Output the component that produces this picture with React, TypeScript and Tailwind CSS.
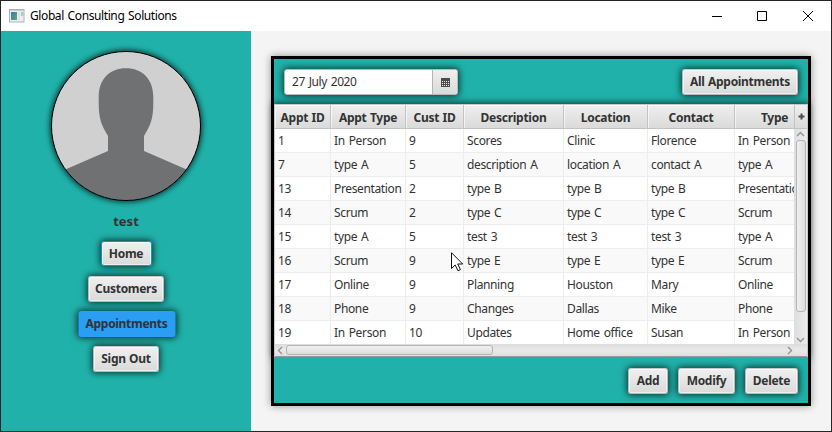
import React from "react";

const columns = [
  { label: "Appt ID", width: 56 },
  { label: "Appt Type", width: 75 },
  { label: "Cust ID", width: 58 },
  { label: "Description", width: 100 },
  { label: "Location", width: 84 },
  { label: "Contact", width: 87 },
  { label: "Type", width: 80 },
];

const rows = [
  ["1", "In Person", "9", "Scores", "Clinic", "Florence", "In Person"],
  ["7", "type A", "5", "description A", "location A", "contact A", "type A"],
  ["13", "Presentation", "2", "type B", "type B", "type B", "Presentation"],
  ["14", "Scrum", "2", "type C", "type C", "type C", "Scrum"],
  ["15", "type A", "5", "test 3", "test 3", "test 3", "type A"],
  ["16", "Scrum", "9", "type E", "type E", "type E", "Scrum"],
  ["17", "Online", "9", "Planning", "Houston", "Mary", "Online"],
  ["18", "Phone", "9", "Changes", "Dallas", "Mike", "Phone"],
  ["19", "In Person", "10", "Updates", "Home office", "Susan", "In Person"],
];

function Button({ label, className, look = "normal" }: { label: string; className: string; look?: "normal" | "focus" | "active" }) {
  const looks = {
    normal:
      "border border-[#b9b9b9] border-t-[#c8c8c8] bg-linear-to-b from-[#f0f0f0] to-[#dadada] shadow-[inset_0_0_0_1px_rgba(255,255,255,0.55),0_0_7px_1px_rgba(0,0,0,0.72)]",
    focus:
      "border border-[#1592cf] bg-linear-to-b from-[#f0f0f0] to-[#dadada] shadow-[inset_0_0_0_1px_rgba(255,255,255,0.55),0_0_7px_1px_rgba(0,0,0,0.72)]",
    active: "bg-[#2a9df4] shadow-[0_0_7px_1px_rgba(0,0,0,0.72)]",
  };
  return (
    <button className={`flex shrink-0 items-center justify-center rounded-[3px] font-bold tracking-[-0.3px] [word-spacing:0.6px] ${looks[look]} ${className}`}>
      <span className="whitespace-nowrap">{label}</span>
    </button>
  );
}

function Avatar() {
  return (
    <svg width="170" height="170" viewBox="0 0 170 170" className="block shrink-0">
      <defs>
        <clipPath id="face"><circle cx="85" cy="85" r="74.5" /></clipPath>
        <filter id="glow" x="-20%" y="-20%" width="140%" height="140%"><feGaussianBlur stdDeviation="3" /></filter>
      </defs>
      <circle cx="85" cy="85" r="75.5" fill="#000" opacity=".85" filter="url(#glow)" />
      <circle cx="85" cy="85" r="74.5" fill="#d0d0d0" />
      <path
        clipPath="url(#face)"
        fill="#707173"
        d="M85 27.300C69 27.300 57.700 38 57.700 56V62C57.700 78 60.500 84 67 95V110L25.500 128L0 170H170L144.500 128L103 110V95C109.500 84 112.300 78 112.300 62V56C112.300 38 101 27.300 85 27.300Z"
      />
      <circle cx="85" cy="85" r="74.500" fill="none" stroke="#000" />
    </svg>
  );
}

function Chevron({ d, className }: { d: string; className?: string }) {
  return (
    <svg width="9" height="9" viewBox="0 0 9 9" fill="none" stroke="#949494" strokeWidth="1.400" className={`block shrink-0 ${className ?? ""}`}>
      <path d={d} />
    </svg>
  );
}

function TitleBar() {
  return (
    <header className="flex h-[30px] shrink-0 items-center bg-white pl-2">
      <svg width="16" height="14" viewBox="0 0 16 14" className="shrink-0">
        <defs>
          <linearGradient id="app" x2="1" y2="1"><stop stopColor="#4778a8" /><stop offset="1" stopColor="#4cac78" /></linearGradient>
        </defs>
        <rect x=".5" y=".5" width="14.500" height="12.500" fill="#ededf0" stroke="#aeb2b7" />
        <path d="M1 1.500H15" stroke="#c5cbd0" />
        <rect x="2" y="3" width="6" height="8" fill="url(#app)" />
        <rect x="9" y="3" width="2" height="8" fill="#dce3e7" />
        <rect x="12" y="3" width="2.500" height="4" fill="#a6d0c4" />
      </svg>
      <span className="ml-[5px] grow text-black tracking-[-0.4px] [word-spacing:1px]">Global Consulting Solutions</span>
      <svg width="120" height="12" viewBox="0 0 120 12" fill="none" stroke="#000" className="shrink-0">
        <path d="M1 6.500H11M46.500 1.500H55.500V10.500H46.500ZM92 1L102 11M102 1L92 11" />
      </svg>
    </header>
  );
}

function Sidebar() {
  return (
    <aside className="flex w-[250px] shrink-0 flex-col items-center bg-[#20b2aa] pt-[10px]">
      <Avatar />
      <div className="mt-[1px] h-[18px] text-[13px] leading-[18px] font-bold">test</div>
      <nav className="mt-[11px] flex flex-col items-center gap-[9px]">
        <Button label="Home" look="focus" className="h-[25px] w-[51px]" />
        <Button label="Customers" className="mt-[1px] h-[26px] w-[76px]" />
        <Button label="Appointments" look="active" className="h-[26px] w-[97px] translate-x-[0.5px]" />
        <Button label="Sign Out" className="h-[26px] w-[66px]" />
      </nav>
    </aside>
  );
}

function DatePicker() {
  return (
    <div className="flex h-[26px] w-[174px] rounded-[3px] border border-[#bababa] bg-white shadow-[0_0_7px_1px_rgba(0,0,0,0.72)]">
      <div className="flex grow items-center pl-[7px] tracking-[-0.4px] [word-spacing:1px]">27 July 2020</div>
      <div className="flex w-[25px] items-center justify-center rounded-r-[2px] border-l border-[#b5b5b5] bg-linear-to-b from-[#efefef] to-[#dadada]">
        <svg width="9" height="9" viewBox="0 0 9 9">
          <rect width="9" height="9" fill="#4d4d4d" />
          <path d="M1 3.500H8M1 5.500H8M1 7.500H8" stroke="#e8e8e8" strokeDasharray="1 1" />
        </svg>
      </div>
    </div>
  );
}

function AppointmentTable() {
  return (
    <div className="flex h-[253px] shrink-0 flex-col border-x border-t border-[#c8c8c8] bg-white shadow-[0_0_7px_1px_rgba(0,0,0,0.720)]">
      <div className="flex h-[24px] shrink-0 border-b border-[#c3c3c3] bg-linear-to-b from-[#efefef] to-[#dadada]">
        <div className="flex w-[519px] overflow-hidden">
          {columns.map((c) => (
            <div
              key={c.label}
              style={{ width: c.width }}
              className="flex shrink-0 items-center justify-center border-r border-[#c3c3c3] pt-[2px] font-bold tracking-[-0.26px] [word-spacing:0.5px] whitespace-nowrap shadow-[inset_1px_1px_0_rgba(255,255,255,0.6)]"
            >
              {c.label}
            </div>
          ))}
        </div>
        <div className="flex grow items-center justify-center border-l border-[#c3c3c3]">
          <svg width="7" height="7" viewBox="0 0 7 7"><path d="M3.500 .5V6.500M.5 3.500H6.500" stroke="#4d4d4d" strokeWidth="2" /></svg>
        </div>
      </div>
      <div className="flex h-[215px] shrink-0">
        <div className="w-[519px] shrink-0 overflow-hidden">
          {rows.map((row, i) => (
            <div key={row[0]} className={`flex h-[24px] border-b border-[#ededed] ${i % 2 ? "bg-[#f9f9f9]" : "bg-white"}`}>
              {row.map((cell, j) => (
                <div
                  key={j}
                  style={{ width: columns[j].width }}
                  className="flex shrink-0 items-center border-r border-[#ededed] pt-px pl-[3px] tracking-[-0.36px] [word-spacing:1.2px] whitespace-nowrap"
                >
                  {cell}
                </div>
              ))}
            </div>
          ))}
        </div>
        <div className="flex grow flex-col items-center bg-linear-to-r from-[#dedede] to-[#ebebeb] pt-[1px]">
          <Chevron d="M1 6L4.500 2.500L8 6" />
          <div className="mt-[1px] h-[172px] w-[10px] rounded-[3px] border border-[#b5b5b5] bg-linear-to-r from-[#f0f0f0] to-[#dddddd]" />
          <Chevron d="M1 3L4.500 6.500L8 3" className="mt-auto" />
        </div>
      </div>
      <div className="flex grow items-center border-b border-b-[#999] bg-linear-to-b from-[#dcdcdc] via-[#e9e9e9] to-[#e0e0e0] pl-px">
        <Chevron d="M6 1L2.500 4.500L6 8" />
        <div className="ml-[1px] h-[10px] w-[207px] rounded-[3px] border border-[#b5b5b5] bg-linear-to-b from-[#f0f0f0] to-[#dddddd]" />
        <Chevron d="M3 1L6.500 4.500L3 8" className="mr-[13px] ml-auto" />
      </div>
    </div>
  );
}

export default function App() {
  return (
    <div className="relative flex h-[432px] w-[832px] flex-col overflow-hidden border border-[#252427] bg-[#f4f4f4] font-['Noto_Sans','Open_Sans',sans-serif] text-[12px] leading-[16px] text-[#333]">
      <TitleBar />
      <div className="flex min-h-0 grow">
        <Sidebar />
        <main className="pt-[25px] pl-[20px]">
          <section className="flex h-[350px] w-[540px] flex-col border-[3px] border-black bg-[#20b2aa] shadow-[0_0_8px_rgba(0,0,0,0.4)]">
            <div className="flex h-[45px] shrink-0 items-start justify-between px-[10px] pt-[10px]">
              <DatePicker />
              <Button label="All Appointments" className="h-[26px] w-[116px]" />
            </div>
            <AppointmentTable />
            <div className="relative flex grow justify-end gap-[10px] bg-[#20b2aa] pt-[11px] pr-[10px]">
              <Button label="Add" className="h-[26px] w-[40px]" />
              <Button label="Modify" className="h-[26px] w-[57px]" />
              <Button label="Delete" className="h-[26px] w-[53px]" />
            </div>
          </section>
        </main>
      </div>
      <svg width="13" height="20" viewBox="0 0 13 20" className="absolute top-[251px] left-[450px]">
        <path d="M.5 .7V16.500L4.200 13L7 18.800L9.400 17.600L6.700 12H11.700Z" fill="#fff" stroke="#111" />
      </svg>
    </div>
  );
}
